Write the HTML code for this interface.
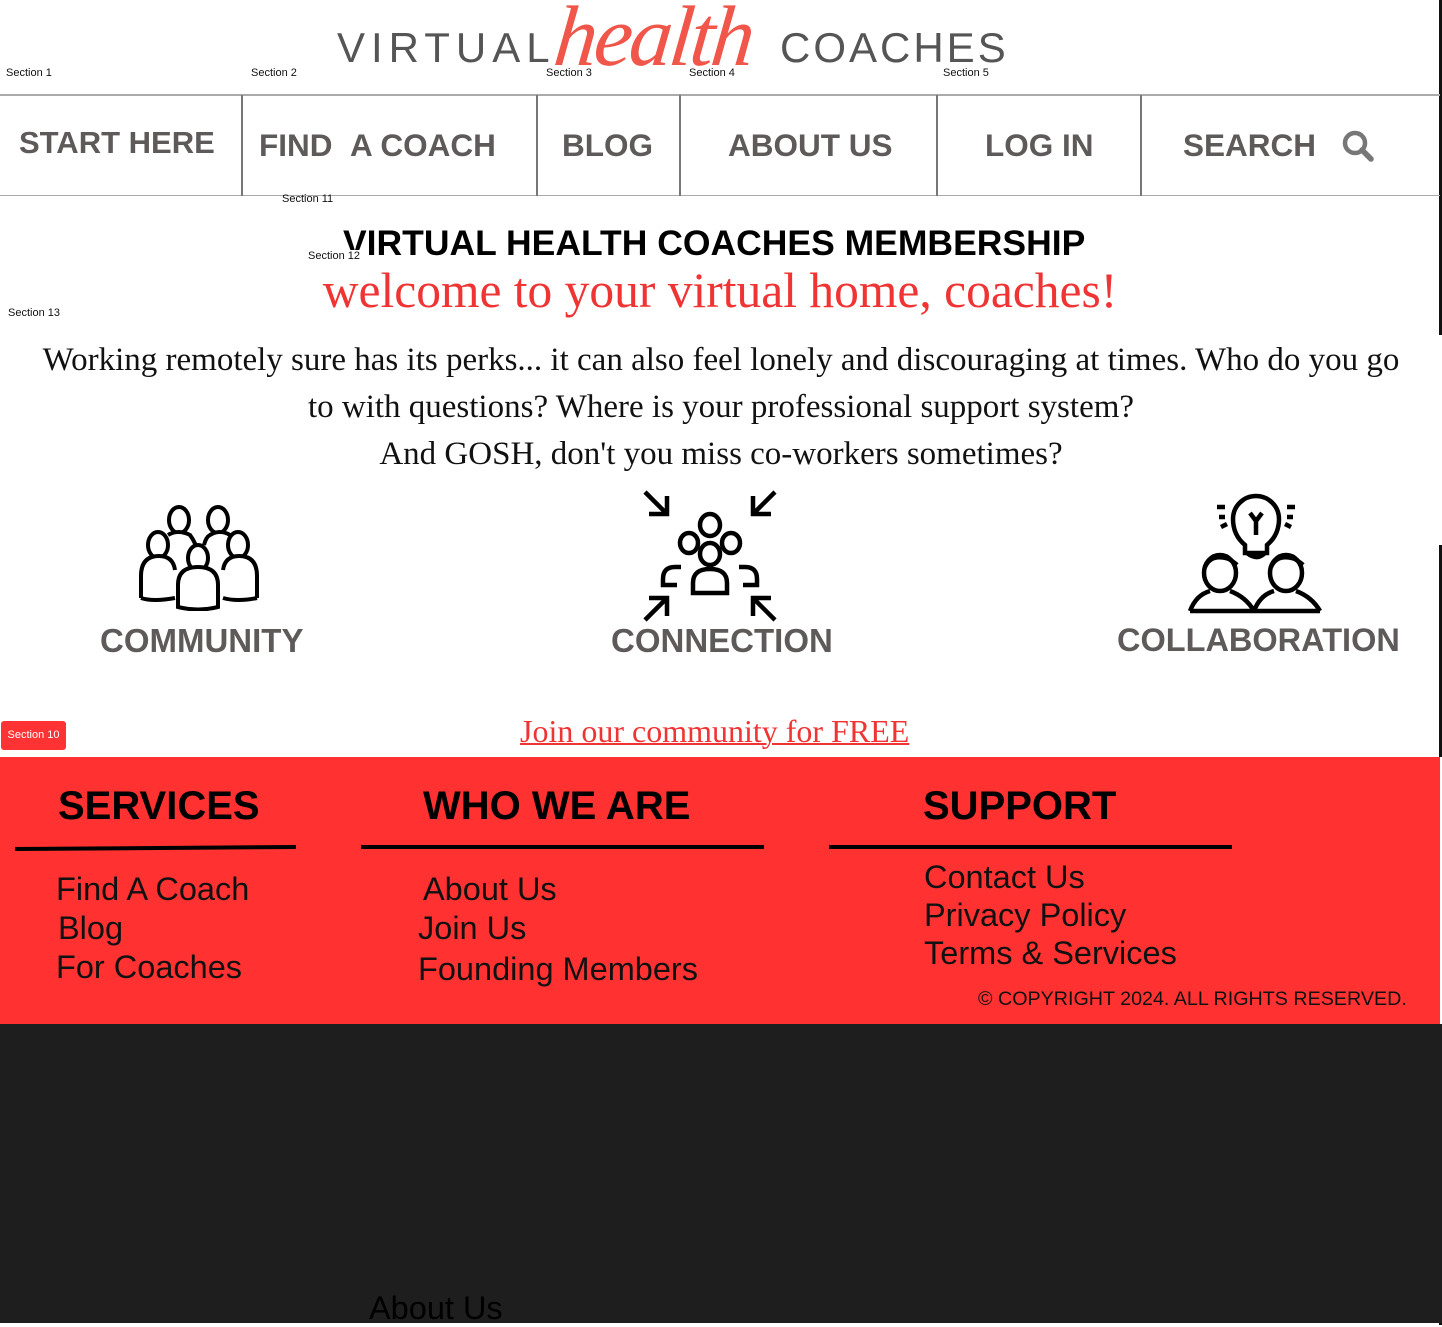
<!DOCTYPE html>
<html><head><meta charset="utf-8"><style>
*{margin:0;padding:0;box-sizing:border-box}
body{width:1442px;height:1323px;position:relative;background:#fff;font-family:"Liberation Sans",sans-serif;overflow:hidden}
.a{position:absolute;white-space:nowrap}
.sec{font-size:11px;color:#111}
.nav{font-size:32px;font-weight:bold;color:#5e5a5a;top:124px}
.vl{position:absolute;top:95px;width:2px;height:101px;background:#777}
.serif{font-family:"Liberation Serif",serif}
.ic{font-size:33px;font-weight:bold;color:#5e5a5a;top:622px}
.fh{font-size:40px;font-weight:bold;color:#000;top:784px}
.fl{font-size:32.5px;color:#111;font-weight:300}
</style></head><body>
<div class="a" style="right:0;top:0;width:3px;height:335px;background:#111"></div>
<div class="a" style="right:0;top:545px;width:3px;height:780px;background:#111"></div>

<div class="a" style="left:337px;top:24px;font-size:42px;letter-spacing:6px;color:#555;font-weight:300">VIRTUAL</div>
<div class="a" style="left:555px;top:-14px;font-size:86px;color:#f0564a;font-style:italic;font-family:'Liberation Serif',serif;letter-spacing:-3px;transform:skewX(-6deg)">health</div>
<div class="a" style="left:780px;top:24px;font-size:42px;letter-spacing:3px;color:#555;font-weight:300">COACHES</div>

<div class="a sec" style="left:6px;top:67px">Section 1</div>
<div class="a sec" style="left:251px;top:67px">Section 2</div>
<div class="a sec" style="left:546px;top:67px">Section 3</div>
<div class="a sec" style="left:689px;top:67px">Section 4</div>
<div class="a sec" style="left:943px;top:67px">Section 5</div>

<div class="a" style="left:0;top:94px;width:1440px;height:2px;background:#aaa"></div>
<div class="a" style="left:0;top:195px;width:1440px;height:1px;background:#aaa"></div>
<div class="vl" style="left:241px"></div>
<div class="vl" style="left:536px"></div>
<div class="vl" style="left:679px"></div>
<div class="vl" style="left:936px"></div>
<div class="vl" style="left:1140px"></div>
<div class="a nav" style="left:19px;top:125px;font-size:31px">START HERE</div>
<div class="a nav" style="left:259px;top:127px;font-size:31.5px">FIND &nbsp;A COACH</div>
<div class="a nav" style="left:562px;top:127px;font-size:31.5px">BLOG</div>
<div class="a nav" style="left:728px;top:127px;font-size:31.5px">ABOUT US</div>
<div class="a nav" style="left:985px;top:127px;font-size:31.5px">LOG IN</div>
<div class="a nav" style="left:1183px;top:127px;font-size:31.5px">SEARCH</div>
<svg class="a" style="left:1340px;top:128px" width="36" height="36" viewBox="0 0 36 36"><circle cx="15" cy="15" r="10" fill="none" stroke="#777" stroke-width="4.5"/><path d="M22 22l9 9" stroke="#777" stroke-width="5.5" stroke-linecap="round"/></svg>

<div class="a sec" style="left:282px;top:193px">Section 11</div>
<div class="a" style="left:343px;top:223px;font-size:35.5px;font-weight:bold;color:#000">VIRTUAL HEALTH COACHES MEMBERSHIP</div>
<div class="a sec" style="left:308px;top:250px;background:#fff;padding-right:2px">Section 12</div>
<div class="a serif" style="left:0;width:1440px;text-align:center;top:262px;font-size:49.5px;color:#f03333">welcome to your virtual home, coaches!</div>
<div class="a sec" style="left:8px;top:307px">Section 13</div>
<div class="a serif" style="left:0;width:1442px;text-align:center;top:337px;font-size:33px;line-height:47px;color:#111;white-space:normal">Working remotely sure has its perks... it can also feel lonely and discouraging at times. Who do you go<br>to with questions? Where is your professional support system?<br>And GOSH, don't you miss co-workers sometimes?</div>

<svg class="a" style="left:138px;top:503px" width="122" height="108" viewBox="0 0 122 108" fill="#fff" stroke="#000" stroke-width="4">
<ellipse cx="41" cy="17" rx="10" ry="13"/><ellipse cx="80" cy="17" rx="10" ry="13"/>
<path d="M30 32q10-6 22 0 6 8 8 18"/><path d="M66 42q2-8 6-10 10-6 20 0"/>
<ellipse cx="20" cy="42" rx="10" ry="13"/><ellipse cx="100" cy="42" rx="10" ry="13"/>
<path d="M3 95v-22q0-20 18-20 14 0 16 14"/><path d="M119 95v-22q0-20-18-20-14 0-16 14"/>
<ellipse cx="60" cy="55" rx="10" ry="13"/>
<path d="M3 95q12 4 34 0M85 95q14 4 34 0"/>
<path d="M40 104v-22q0-18 20-18t20 18v22q-20 5-40 0z"/>
</svg>
<svg class="a" style="left:641px;top:488px" width="138" height="136" viewBox="0 0 138 136" fill="none" stroke="#000" stroke-width="4.5">
<path d="M4 4l22 22M26 8v18H8"/><path d="M134 4l-22 22M112 8v18h18"/>
<path d="M4 132l22-22M8 110h18v18"/><path d="M134 132l-22-22M130 110h-18v18"/>
<ellipse cx="69" cy="37" rx="10" ry="11"/><ellipse cx="48" cy="55" rx="9" ry="10"/><ellipse cx="90" cy="55" rx="9" ry="10"/>
<ellipse cx="69" cy="66" rx="10" ry="11"/>
<path d="M40 79h-6q-12 0-12 12v6h14"/><path d="M98 79h6q12 0 12 12v6h-14"/>
<path d="M52 105v-10q0-14 17-14t17 14v10z"/>
</svg>
<svg class="a" style="left:1187px;top:485px" width="138" height="132" viewBox="0 0 138 132" fill="none" stroke="#000" stroke-width="4.5">
<path d="M58 60q-12-10-12-26a23 23 0 0 1 46 0q0 16-12 26v8H58z"/><path d="M60 68q10 8 18 0"/>
<path d="M63 28l6 8 6-8M69 36v14"/>
<path d="M30 22h8M32 32h6M34 42l6-3M100 22h8M100 32h6M98 39l6 3"/>
<ellipse cx="33" cy="88" rx="16" ry="18"/><ellipse cx="99" cy="88" rx="16" ry="18"/>
<path d="M18 82q6-14 24-8 6 4 8 6M84 82q6-14 24-8 6 4 8 6"/>
<path d="M3 126q6-16 20-20M43 106q16 6 24 20M67 126q6-16 20-20M109 106q16 6 24 20M3 126h130"/>
</svg>
<div class="a ic" style="left:100px">COMMUNITY</div>
<div class="a ic" style="left:611px">CONNECTION</div>
<div class="a ic" style="left:1117px;font-size:32.5px">COLLABORATION</div>

<div class="a" style="left:1px;top:721px;width:65px;height:29px;background:#f33;border-radius:3px;color:#fff;font-size:11px;line-height:29px;text-align:center">Section 10</div>
<div class="a serif" style="left:520px;top:713px;font-size:32px;color:#f03333;text-decoration:underline;text-decoration-thickness:2px">Join our community for FREE</div>

<div class="a" style="left:0;top:757px;width:1440px;height:267px;background:#ff3131"></div>
<div class="a" style="left:1440px;top:757px;width:2px;height:267px;background:#fff"></div>
<div class="a" style="left:0;top:1024px;width:1442px;height:299px;background:#1e1e1e"></div>
<div class="a fh" style="left:58px">SERVICES</div>
<div class="a fh" style="left:423px">WHO WE ARE</div>
<div class="a fh" style="left:923px">SUPPORT</div>
<div class="a" style="left:15px;top:846px;width:281px;height:4px;background:#000;transform:rotate(-0.4deg)"></div>
<div class="a" style="left:361px;top:845px;width:403px;height:4px;background:#000"></div>
<div class="a" style="left:829px;top:845px;width:403px;height:4px;background:#000"></div>
<div class="a fl" style="left:56px;top:871px">Find A Coach</div>
<div class="a fl" style="left:58px;top:910px">Blog</div>
<div class="a fl" style="left:56px;top:949px">For Coaches</div>
<div class="a fl" style="left:423px;top:871px">About Us</div>
<div class="a fl" style="left:418px;top:910px">Join Us</div>
<div class="a fl" style="left:418px;top:951px">Founding Members</div>
<div class="a fl" style="left:924px;top:859px">Contact Us</div>
<div class="a fl" style="left:924px;top:897px">Privacy Policy</div>
<div class="a fl" style="left:924px;top:935px">Terms &amp; Services</div>
<div class="a" style="left:978px;top:988px;font-size:19.7px;color:#111;font-weight:300">© COPYRIGHT 2024. ALL RIGHTS RESERVED.</div>
<div class="a fl" style="left:369px;top:1290px;color:#000">About Us</div>
</body></html>
